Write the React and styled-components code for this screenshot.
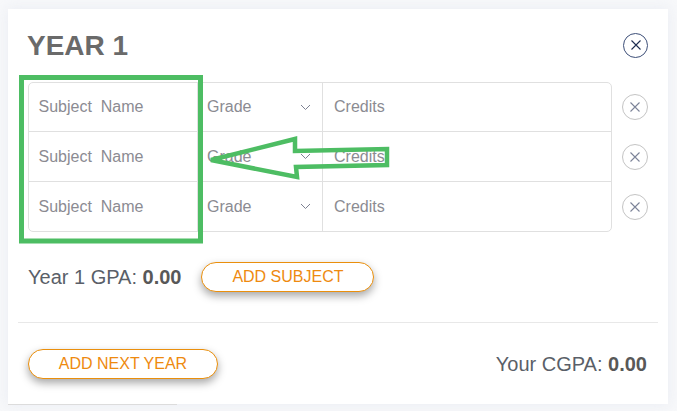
import React from 'react';
import styled, { createGlobalStyle } from 'styled-components';

const GlobalStyle = createGlobalStyle`
  html, body {
    margin: 0;
    padding: 0;
    height: 100%;
    background-color: #f7f8fa;
    overflow: hidden;
  }
  body {
    font-family: "Liberation Sans", Arial, sans-serif;
  }
`;

const Card = styled.div`
  position: relative;
  box-sizing: border-box;
  width: 660px;
  height: 395px;
  margin: 9px 0 0 8px;
  padding: 20px 10px 0;
  background-color: #fff;
  box-shadow: 0 0 12px rgba(225, 229, 238, 0.6);
`;

const Header = styled.div`
  display: flex;
  align-items: center;
  justify-content: space-between;
  height: 34px;
  padding: 0 10px 0 9px;
`;

const Title = styled.h1`
  margin: 0;
  font-size: 28px;
  font-weight: 700;
  color: #6a6a6a;
`;

const CircleButton = styled.button`
  display: flex;
  align-items: center;
  justify-content: center;
  box-sizing: border-box;
  width: ${(p) => (p.$dark ? '25px' : '26px')};
  height: ${(p) => (p.$dark ? '25px' : '26px')};
  margin-bottom: ${(p) => (p.$dark ? '2px' : '0')};
  padding: 0;
  background: #fff;
  border: 1px solid ${(p) => (p.$dark ? '#3d4f78' : '#c4c4c4')};
  border-radius: 50%;
  color: ${(p) => (p.$dark ? '#1d2d50' : '#7c8499')};
`;

const TableRow = styled.div`
  display: flex;
  align-items: flex-start;
  margin: 19px 0 0 10px;
`;

const Table = styled.div`
  box-sizing: border-box;
  width: 584px;
  border: 1px solid #e0e0e0;
  border-radius: 5px;
`;

const Row = styled.div`
  box-sizing: border-box;
  display: grid;
  grid-template-columns: 168px 125px 1fr;
  height: ${(p) => (p.$first ? '48px' : '50px')};
  border-top: ${(p) => (p.$first ? 'none' : '1px solid #e0e0e0')};
`;

const Cell = styled.div`
  display: flex;
  align-items: center;
  justify-content: space-between;
  padding: 0 11px 0 ${(p) => p.$inset}px;
  border-left: ${(p) => (p.$first ? 'none' : '1px solid #e0e0e0')};
  font-size: 16px;
  color: #8b8b92;
  white-space: pre;
`;

const RemoveColumn = styled.div`
  display: flex;
  flex-direction: column;
  gap: 24px;
  margin: 12px 0 0 10px;
`;

const Summary = styled.div`
  display: flex;
  align-items: center;
  gap: 20px;
  margin: 30px 0 0 10px;
`;

const Gpa = styled.div`
  font-size: 20px;
  color: #5a5f68;

  b {
    font-weight: 700;
    color: #585858;
  }
`;

const OutlineButton = styled.button`
  box-sizing: border-box;
  width: ${(p) => p.$width}px;
  height: 30px;
  padding: 0;
  background: #fff;
  border: 1px solid #ea8f0c;
  border-radius: 15px;
  box-shadow: 0 4px 8px rgba(0, 0, 0, 0.35);
  font-family: inherit;
  font-size: 16px;
  color: #ee8a0f;
`;

const Divider = styled.hr`
  margin: 30px 0 0;
  border: none;
  border-top: 1px solid #e8e8e8;
`;

const Footer = styled.div`
  display: flex;
  align-items: center;
  justify-content: space-between;
  margin-top: 26px;
  padding: 0 11px 0 10px;
`;

const BottomEdge = styled.div`
  position: absolute;
  left: 0;
  bottom: -1px;
  width: 169px;
  height: 1px;
  background-color: #dcdcdc;
`;

const Annotation = styled.svg`
  position: absolute;
  left: -8px;
  top: -9px;
  pointer-events: none;
`;

const CloseIcon = ({ size }) => (
  <svg width={size} height={size} viewBox="0 0 12 12" fill="none" stroke="currentColor" strokeWidth="1.1">
    <path d="M1.5 1.5 L10.5 10.5 M10.5 1.5 L1.5 10.5" />
  </svg>
);

const Chevron = () => (
  <svg width="11" height="7" viewBox="0 0 11 7" fill="none" stroke="#7d8192" strokeWidth="1">
    <path d="M1 1 L5.5 5.5 L10 1" />
  </svg>
);

const rows = [0, 1, 2];

const App = () => {
  return (
    <>
      <GlobalStyle />
      <Card>
        <Header>
          <Title>YEAR 1</Title>
          <CircleButton $dark type="button">
            <CloseIcon size={12} />
          </CircleButton>
        </Header>

        <TableRow>
          <Table>
            {rows.map((row) => (
              <Row key={row} $first={row === 0}>
                <Cell $first $inset={9.5}>{'Subject  Name'}</Cell>
                <Cell $inset={9}>
                  Grade
                  <Chevron />
                </Cell>
                <Cell $inset={11}>Credits</Cell>
              </Row>
            ))}
          </Table>
          <RemoveColumn>
            {rows.map((row) => (
              <CircleButton key={row} type="button">
                <CloseIcon size={12} />
              </CircleButton>
            ))}
          </RemoveColumn>
        </TableRow>

        <Summary>
          <Gpa>
            Year 1 GPA: <b>0.00</b>
          </Gpa>
          <OutlineButton $width={173} type="button">ADD SUBJECT</OutlineButton>
        </Summary>

        <Divider />

        <Footer>
          <OutlineButton $width={190} type="button">ADD NEXT YEAR</OutlineButton>
          <Gpa>
            Your CGPA: <b>0.00</b>
          </Gpa>
        </Footer>

        <BottomEdge />

        <Annotation width="677" height="411" viewBox="0 0 677 411" fill="none" stroke="#4dbd63">
          <rect x="21.5" y="77.5" width="179" height="163.5" strokeWidth="5" />
          <path d="M211 160 L295 139 L295 151 L387 149 L387 165 L296 167 L297 177 Z" strokeWidth="4.5" />
        </Annotation>
      </Card>
    </>
  );
};

export default App;
